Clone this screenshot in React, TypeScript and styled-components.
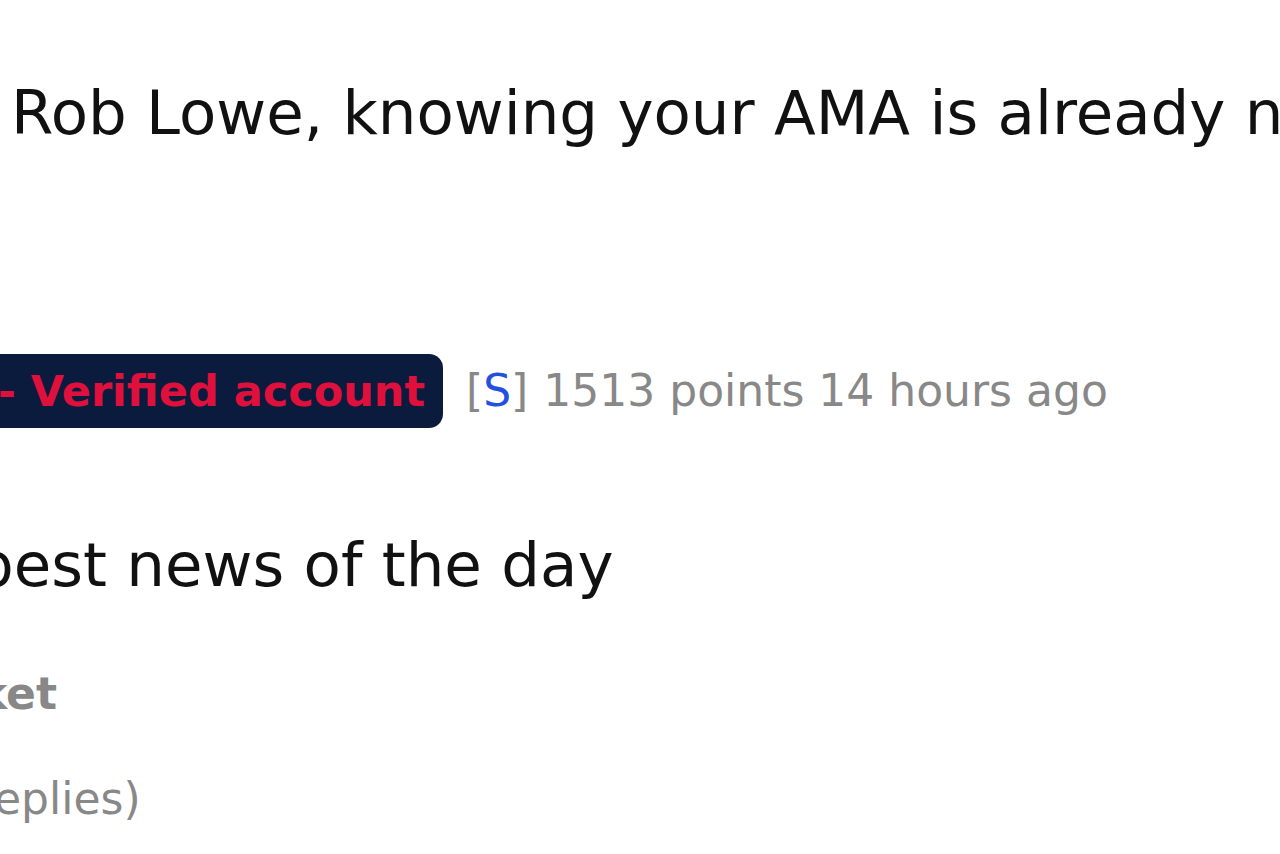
import styled, {createGlobalStyle} from "styled-components";

const GlobalStyle = createGlobalStyle`
	html, body {
		margin: 0;
		padding: 0;
		background: #ffffff;
	}
	body {
		font-family: "DejaVu Sans", Verdana, sans-serif;
	}
`;

const Page = styled.div`
	width: 1280px;
	height: 854px;
	overflow: hidden;
	background: #ffffff;
	display: flex;
	flex-direction: column;
`;

const BodyText = styled.p<{ $shift: number; $top: number }>`
	margin: ${p => p.$top}px 0 0 ${p => p.$shift}px;
	font-size: 61px;
	line-height: 72px;
	color: #111111;
	white-space: nowrap;
`;

const Tagline = styled.div`
	margin-top: 205px;
	display: flex;
	align-items: baseline;
	white-space: nowrap;
	font-size: 44px;
	color: #888888;
`;

const Flair = styled.span`
	margin-left: -19px;
	padding: 0 18px 0 17px;
	height: 74px;
	line-height: 74px;
	background: #0b1b3e;
	border-radius: 0 14px 14px 0;
	color: #e0103c;
	font-weight: 700;
	font-size: 43px;
`;

const Submitter = styled.span`
	margin-left: 23px;
	color: #888888;
	& > a {
		color: #2250e0;
		text-decoration: none;
	}
`;

const Meta = styled.span`
	margin-left: 15px;
	color: #888888;
`;

const Author = styled.p<{ $shift: number }>`
	margin: 67px 0 0 ${p => p.$shift}px;
	font-size: 44px;
	line-height: 52px;
	font-weight: 700;
	color: #888888;
	white-space: nowrap;
`;

const Replies = styled.p<{ $shift: number }>`
	margin: 53px 0 0 ${p => p.$shift}px;
	font-size: 44px;
	line-height: 52px;
	color: #888888;
	white-space: nowrap;
`;

export default function App() {
	return (
		<Page>
			<GlobalStyle/>
			<BodyText $shift={11} $top={77}>Rob Lowe, knowing your AMA is already now</BodyText>
			<Tagline>
				<Flair>- Verified account</Flair>
				<Submitter>[<a>S</a>]</Submitter>
				<Meta>1513 points 14 hours ago</Meta>
			</Tagline>
			<BodyText $shift={-25} $top={101}>best news of the day</BodyText>
			<Author $shift={-22}>ket</Author>
			<Replies $shift={-6}>eplies)</Replies>
		</Page>
	);
}
